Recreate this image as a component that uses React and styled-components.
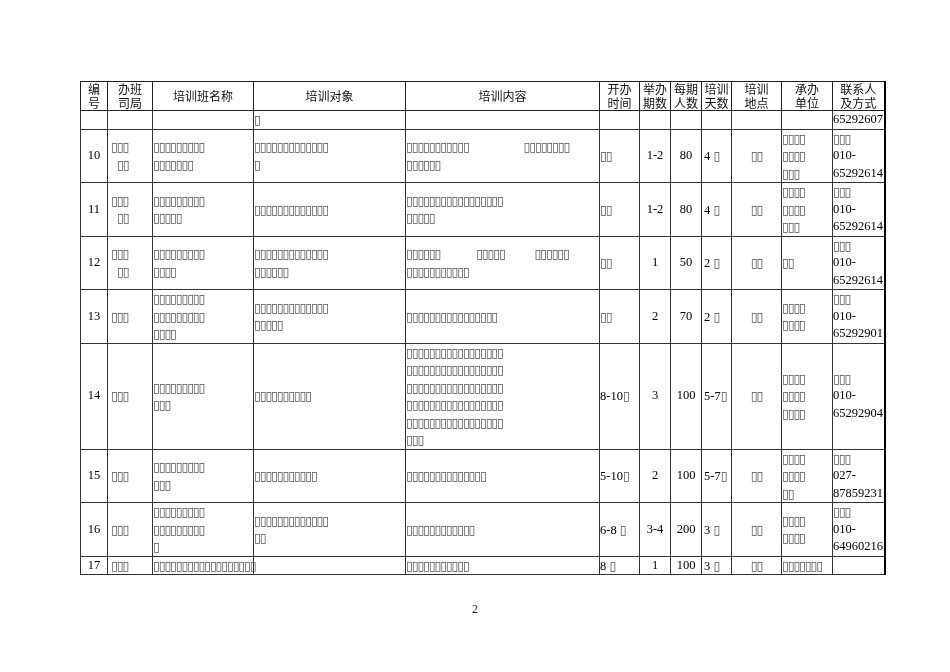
import styled, { createGlobalStyle } from 'styled-components';

const GlobalStyle = createGlobalStyle`
    html, body {
        margin: 0;
        padding: 0;
        background: #ffffff;
    }
`;

const T = (n) => '▯'.repeat(n);

// column layout of the table
const columns = [
    { width: 27, align: 'center', pad: 0 },
    { width: 45, align: 'left', pad: 3 },
    { width: 101, align: 'left', pad: 0 },
    { width: 152, align: 'left', pad: 0 },
    { width: 194, align: 'left', pad: 0 },
    { width: 40, align: 'left', pad: 0 },
    { width: 31, align: 'center', pad: 0 },
    { width: 31, align: 'center', pad: 0 },
    { width: 30, align: 'left', pad: 2 },
    { width: 50, align: 'center', pad: 0 },
    { width: 51, align: 'left', pad: 0 },
    { width: 52, align: 'left', pad: 0 },
];

const headers = [
    ['编', '号'],
    ['办班', '司局'],
    ['培训班名称'],
    ['培训对象'],
    ['培训内容'],
    ['开办', '时间'],
    ['举办', '期数'],
    ['每期', '人数'],
    ['培训', '天数'],
    ['培训', '地点'],
    ['承办', '单位'],
    ['联系人', '及方式'],
];

// a line is a string or a list of segments (string, or a number = gap in px)
const rows = [
    {
        height: 17,
        cells: [[], [], [], [T(1)], [], [], [], [], [], [], [], ['65292607']],
    },
    {
        height: 53,
        cells: [
            ['10'], [T(3), [6, T(2)]], [T(9), T(7)], [T(13), T(1)],
            [[T(11), 55, T(8)], T(6)],
            [T(2)], ['1-2'], ['80'], ['4 ' + T(1)], [T(2)],
            [T(4), T(4), T(3)], [T(3), '010-', '65292614'],
        ],
    },
    {
        height: 52,
        cells: [
            ['11'], [T(3), [6, T(2)]], [T(9), T(5)], [T(13)],
            [T(17), T(5)],
            [T(2)], ['1-2'], ['80'], ['4 ' + T(1)], [T(2)],
            [T(4), T(4), T(3)], [T(3), '010-', '65292614'],
        ],
    },
    {
        height: 52,
        cells: [
            ['12'], [T(3), [6, T(2)]], [T(9), T(4)], [T(13), T(6)],
            [[T(6), 36, T(5), 30, T(6)], T(11)],
            [T(2)], ['1'], ['50'], ['2 ' + T(1)], [T(2)],
            [T(2)], [T(3), '010-', '65292614'],
        ],
    },
    {
        height: 53,
        cells: [
            ['13'], [T(3)], [T(9), T(9), T(4)], [T(13), T(5)],
            [T(16)],
            [T(2)], ['2'], ['70'], ['2 ' + T(1)], [T(2)],
            [T(4), T(4)], [T(3), '010-', '65292901'],
        ],
    },
    {
        height: 106,
        cells: [
            ['14'], [T(3)], [T(9), T(3)], [T(10)],
            [T(17), T(17), T(17), T(17), T(17), T(3)],
            ['8-10' + T(1)], ['3'], ['100'], ['5-7' + T(1)], [T(2)],
            [T(4), T(4), T(4)], [T(3), '010-', '65292904'],
        ],
    },
    {
        height: 53,
        cells: [
            ['15'], [T(3)], [T(9), T(3)], [T(11)],
            [T(14)],
            ['5-10' + T(1)], ['2'], ['100'], ['5-7' + T(1)], [T(2)],
            [T(4), T(4), T(2)], [T(3), '027-', '87859231'],
        ],
    },
    {
        height: 52,
        cells: [
            ['16'], [T(3)], [T(9), T(9), T(1)], [T(13), T(2)],
            [T(12)],
            ['6-8 ' + T(1)], ['3-4'], ['200'], [' 3 ' + T(1)], [T(2)],
            [T(4), T(4)], [T(3), '010-', '64960216'],
        ],
    },
    {
        height: 17,
        cells: [
            ['17'], [T(3)], [T(18)], [],
            [T(11)],
            ['8 ' + T(1)], ['1'], ['100'], [' 3 ' + T(1)], [T(2)],
            [T(7)], [],
        ],
    },
];

function Tofu({ text }) {
    return (
        <>
            {text.split('').map((c, i) => (
                <Glyph key={i}>{c}</Glyph>
            ))}
        </>
    );
}

function Segment({ text }) {
    const parts = text.split(/(▯+)/).filter(Boolean);
    return parts.map((p, i) =>
        p[0] === '▯' ? <Tofu key={i} text={p} /> : <span key={i}>{p}</span>
    );
}

function Line({ line }) {
    const segs = Array.isArray(line) ? line : [line];
    return (
        <LineBox>
            {segs.map((s, i) =>
                typeof s === 'number'
                    ? <Gap key={i} style={{ width: s }} />
                    : <Segment key={i} text={s} />
            )}
        </LineBox>
    );
}

export default function App() {
    return (
        <>
            <GlobalStyle />
            <Page>
                <Table>
                    <colgroup>
                        {columns.map((c, i) => (
                            <col key={i} style={{ width: c.width }} />
                        ))}
                    </colgroup>
                    <thead>
                        <tr>
                            {headers.map((h, i) => (
                                <HeadCell key={i}>
                                    {h.map((t, j) => <HeadLine key={j}>{t}</HeadLine>)}
                                </HeadCell>
                            ))}
                        </tr>
                    </thead>
                    <tbody>
                        {rows.map((r, i) => (
                            <Row key={i} $h={r.height}>
                                {r.cells.map((lines, j) => (
                                    <Cell
                                        key={j}
                                        $align={columns[j].align}
                                        $pad={columns[j].pad}
                                    >
                                        {lines.map((l, k) => <Line key={k} line={l} />)}
                                    </Cell>
                                ))}
                            </Row>
                        ))}
                    </tbody>
                </Table>
                <PageNumber>2</PageNumber>
            </Page>
        </>
    );
}

const Page = styled.div`
    width: 950px;
    height: 672px;
    box-sizing: border-box;
    padding: 81px 0px 0px 80px;
    background: #ffffff;
`;

const Table = styled.table`
    table-layout: fixed;
    width: 804px;
    border-collapse: collapse;
    border-right: 2px solid #000;
    filter: grayscale(1);
`;

const HeadCell = styled.th`
    height: 28px;
    padding: 0px;
    border: 1px solid #222;
    vertical-align: middle;
    text-align: center;
    font-family: "Noto Sans CJK SC", sans-serif;
    font-weight: 400;
    font-size: 12px;
    line-height: 14px;
    color: #111;
`;

const HeadLine = styled.div`
    height: 14px;
`;

const Row = styled.tr`
    height: ${(p) => p.$h}px;
`;

const Cell = styled.td`
    padding: 0px 0px 0px ${(p) => p.$pad}px;
    border: 1px solid #333;
    vertical-align: middle;
    text-align: ${(p) => p.$align};
    white-space: nowrap;
    overflow: visible;
    font-family: "Liberation Serif", "Times New Roman", serif;
    font-size: 12.5px;
    line-height: 17.5px;
    color: #000;
`;

const LineBox = styled.div`
    height: 17.5px;
`;

const Glyph = styled.span`
    display: inline-block;
    width: 5.7px;
    text-align: left;
    font-family: "DejaVu Sans", sans-serif;
    font-size: 12.5px;
    color: #555;
`;

const Gap = styled.span`
    display: inline-block;
`;

const PageNumber = styled.div`
    width: 790px;
    margin-top: 27px;
    text-align: center;
    font-family: "Liberation Serif", serif;
    font-size: 12px;
    color: #222;
`;
